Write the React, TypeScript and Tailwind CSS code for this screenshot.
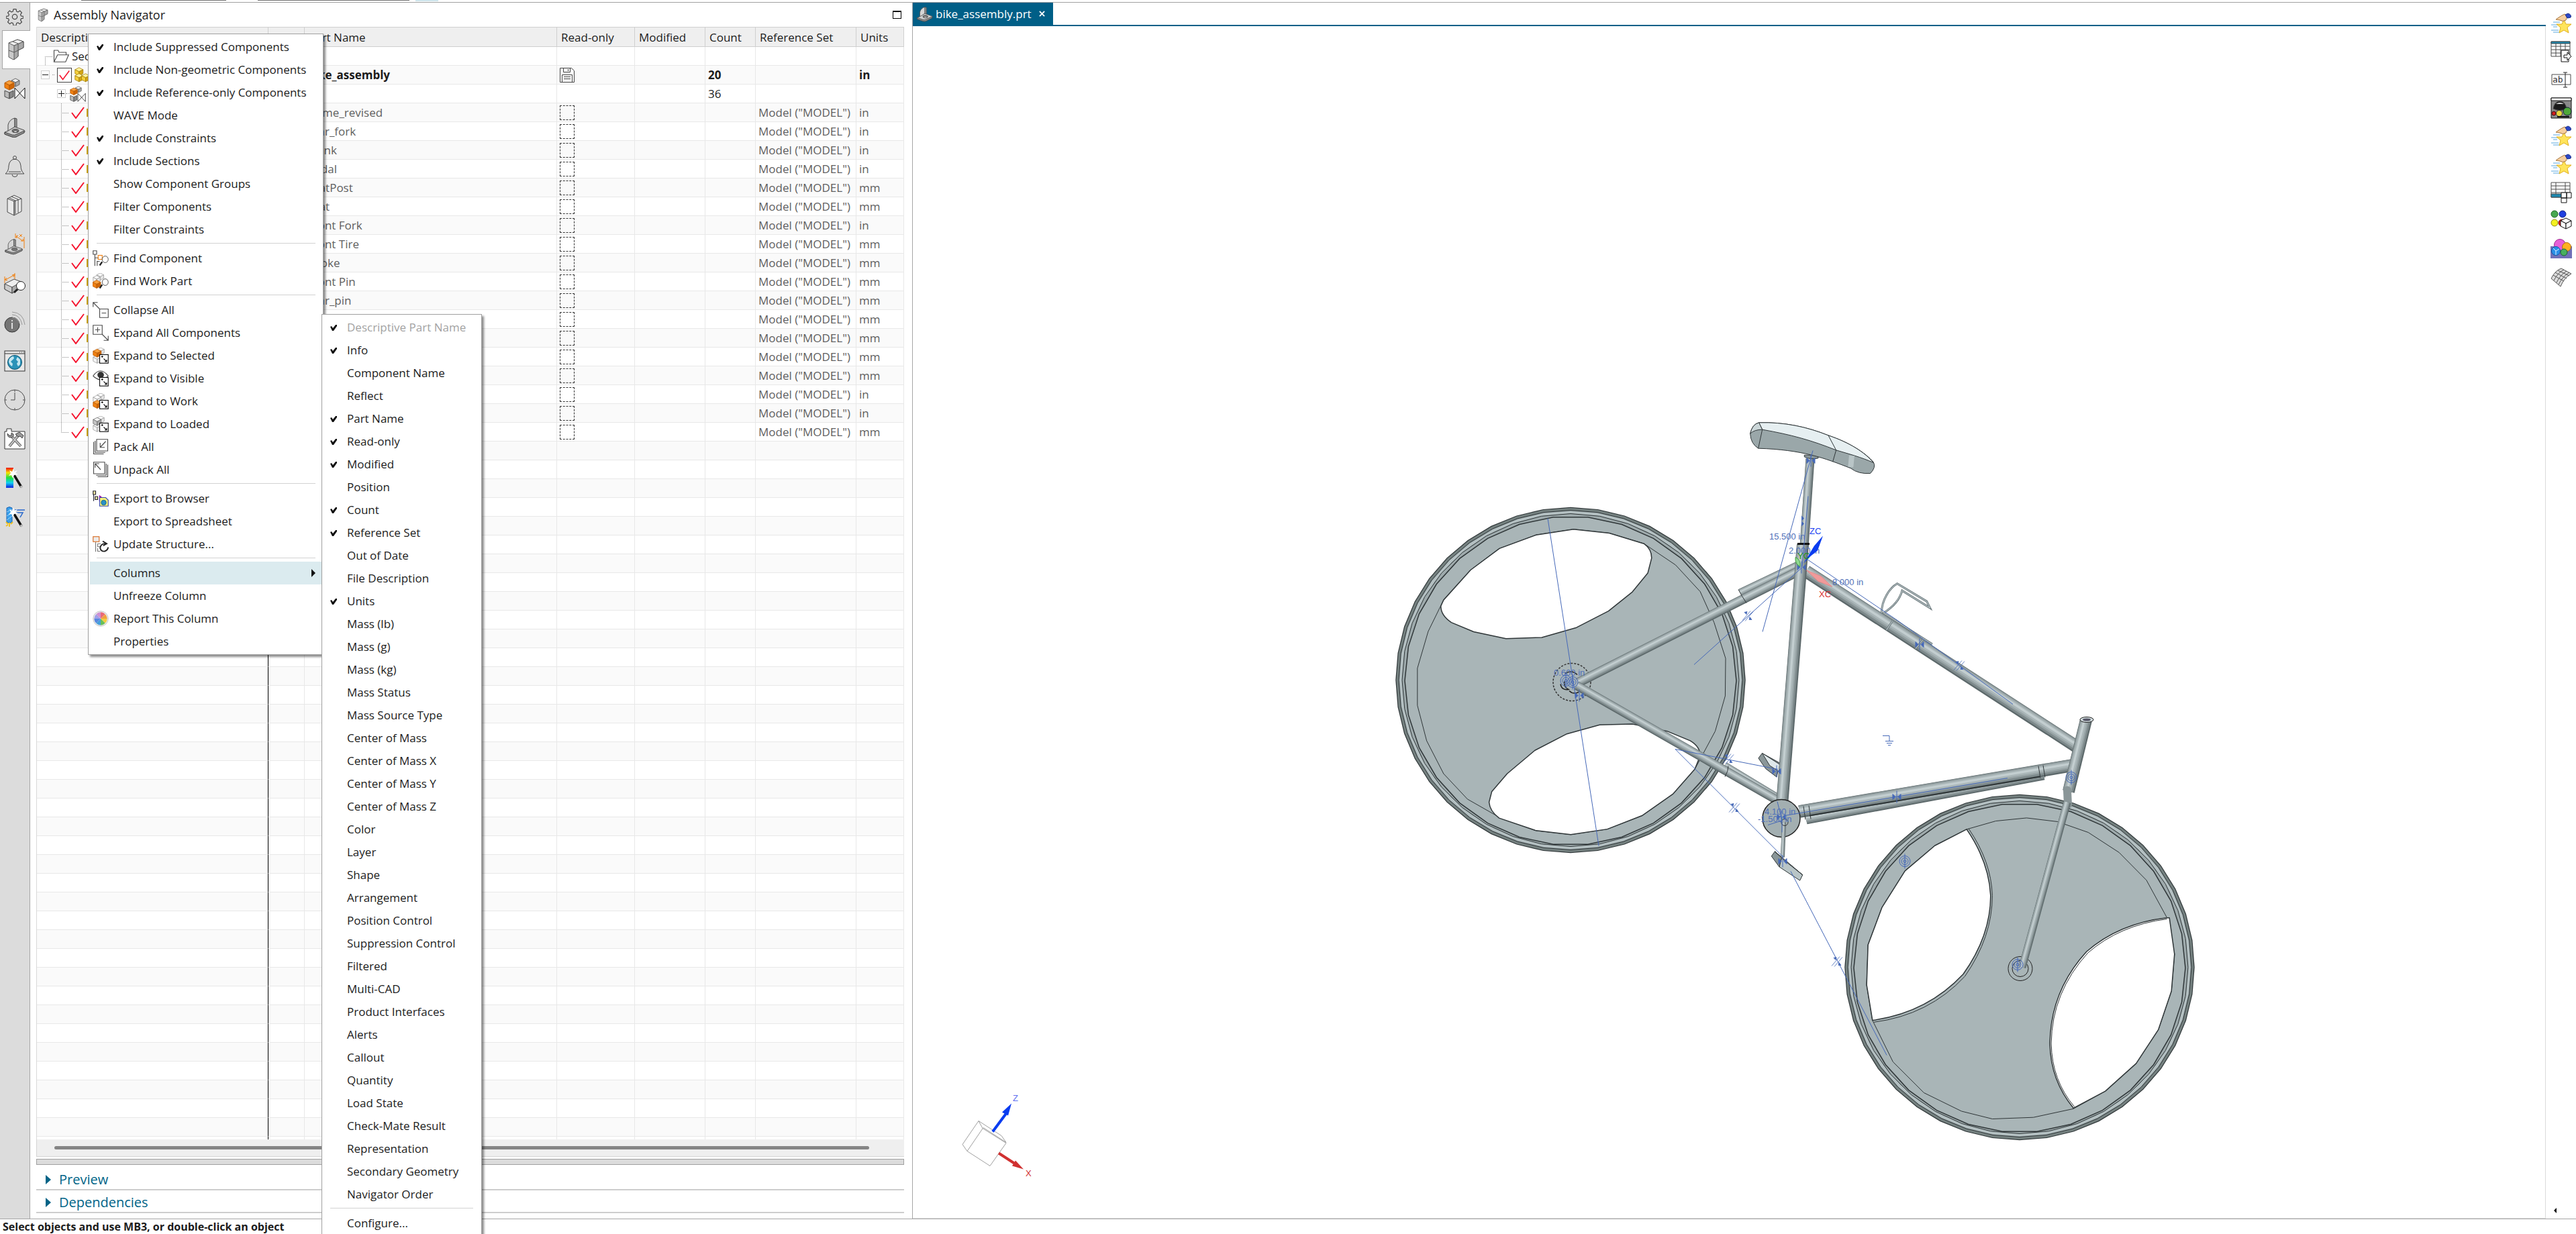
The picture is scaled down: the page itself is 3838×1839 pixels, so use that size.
import { useState } from 'react'
import type { ReactNode } from 'react'

type IconProps = { className?: string }

const INK = '#4a4a4a'
const ORANGE = '#f08010'

/* ---------- icons ---------- */

const Svg = ({ children, className = 'size-8' }: { children: ReactNode; className?: string }) => (
  <svg viewBox="0 0 32 32" className={`shrink-0 ${className}`} fill="none" stroke={INK} strokeWidth="1" aria-hidden="true">
    {children}
  </svg>
)

// isometric cube, (x, y) is the top corner
const Cube = ({ x, y, s = 6, c = ['#f2f2f2', '#c4c4c4', '#a8a8a8'], stroke = '#666' }: { x: number; y: number; s?: number; c?: string[]; stroke?: string }) => (
  <g stroke={stroke} strokeLinejoin="round">
    <path d={`M${x} ${y}l${s} ${s / 2}l${-s} ${s / 2}l${-s} ${-s / 2}z`} fill={c[0]} />
    <path d={`M${x - s} ${y + s / 2}l${s} ${s / 2}v${s}l${-s} ${-s / 2}z`} fill={c[1]} />
    <path d={`M${x + s} ${y + s / 2}l${-s} ${s / 2}v${s}l${s} ${-s / 2}z`} fill={c[2]} />
  </g>
)

const ORANGE_CUBE = ['#f9a03c', '#f08010', '#cf6606']
const YELLOW_CUBE = ['#fff3a0', '#f3cf3c', '#d3a514']
const WHITE_CUBE = ['#fff', '#f4f4f4', '#e6e6e6']

const GearIcon = () => (
  <Svg className="size-[26px]">
    <path
      strokeWidth="1.5"
      strokeLinejoin="round"
      d="M13.500 2h5l.8 4.200 2.600 1.100 3.500-2.400 3.500 3.500-2.400 3.500 1.100 2.600 4.200.8v3.400l-4.200.8-1.100 2.600 2.400 3.500-3.500 3.500-3.500-2.400-2.600 1.100-.8 4.200h-5l-.8-4.200-2.600-1.100-3.500 2.400-3.500-3.500 2.400-3.500-1.100-2.600-4.200-.8v-3.400l4.200-.8 1.100-2.600-2.400-3.500 3.500-3.500 3.500 2.400 2.600-1.100z"
    />
    <circle cx="16" cy="16" r="4.500" strokeWidth="1.500" />
  </Svg>
)

const BlocksIcon = ({ className }: IconProps) => (
  <Svg className={className}>
    <g stroke="#5a5a5a" strokeLinejoin="round">
      <path d="M5 6l13-5 9 3v9l-8 4v9l-7 5-7-4z" fill="#c9c9c9" />
      <path d="M5 6l13-5 9 3-14 6z" fill="#efefef" />
      <path d="M13 10l14-6v9l-8 4v9l-6 5z" fill="#a9a9a9" />
      <path d="M5 17l8 3 6-3M19 7v10M11 4l8 3" fill="none" />
    </g>
  </Svg>
)

const ConstraintIcon = ({ className }: IconProps) => (
  <Svg className={className}>
    <Cube x={17} y={1} s={6} />
    <path d="M1 19l7 3v9l-7-3z" fill="#bbb" />
    <path d="M8 22l6-3v9l-6 3z" fill="#888" />
    <Cube x={8} y={4} s={7} c={ORANGE_CUBE} stroke="#b65a08" />
    <path d="M16 15l15 16V15L16 31z" fill="#fff" stroke="#111" />
  </Svg>
)

const BracketIcon = ({ className }: IconProps) => (
  <Svg className={className}>
    <path d="M6 12q2-8 10-10v13l-10 7z" fill="#d6d6d6" />
    <path d="M16 2l3 1v13l-3-1z" fill="#9a9a9a" />
    <path d="M6 21l10-6 14 5q3 3-3 5l-9 5q-3 1-6 0L1 26v-3z" fill="#cfcfcf" />
    <path d="M1 23l11 4q4 1 7-1l11-5v3l-12 6q-3 1-6 0L1 26z" fill="#8d8d8d" />
    <ellipse cx="17" cy="21" rx="5" ry="2.600" fill="#777" />
    <ellipse cx="17" cy="22" rx="3" ry="1.400" fill="#ddd" />
  </Svg>
)

const BellIcon = () => (
  <Svg>
    <circle cx="16" cy="3" r="2.500" />
    <path d="M2 27q5-4 5-12 1-9 9-10 8 1 9 10 0 8 5 12zM7 24h18" />
    <path d="M12 28a4 3.500 0 0 0 8 0" />
  </Svg>
)

const BooksIcon = () => (
  <Svg>
    <path d="M5 6l10-5 11 5v19l-11 6-10-5z" fill="#e9e9e9" />
    <path d="M5 6l10 4v21M15 10l11-4M8 5l9 4v20M11 3l10 4v20M15 10V31" />
  </Svg>
)

const BracketDimIcon = () => (
  <Svg>
    <g transform="translate(1 7) scale(.86 .78)">
      <path d="M6 12q2-8 10-10v13l-10 7z" fill="#d6d6d6" />
      <path d="M16 2l3 1v13l-3-1z" fill="#9a9a9a" />
      <path d="M6 21l10-6 14 5q3 3-3 5l-9 5q-3 1-6 0L1 26v-3z" fill="#cfcfcf" />
      <path d="M1 23l11 4q4 1 7-1l11-5v3l-12 6q-3 1-6 0L1 26z" fill="#8d8d8d" />
      <ellipse cx="17" cy="21" rx="5" ry="2.600" fill="#777" />
    </g>
    <path d="M17 0v7M30 5v17M18 4l10 7M21 3l-3 1 1 3M25 11h4l-1-3M23 1l4 4M27 1l-4 4" stroke={ORANGE} />
  </Svg>
)

const MeasureIcon = () => (
  <Svg>
    <path d="M1 17l14-7 11 4v9l-14 8-11-6z" fill="#eee" />
    <path d="M1 17l11 5v9l-11-6z" fill="#ccc" />
    <path d="M12 22l14-8v9l-14 8z" fill="#aaa" />
    <path d="M1 6v10M16 1v9M2 11l13-7M4 8l-3 3 4 1M12 4l4-1-2 4" stroke={ORANGE} />
    <path d="M20 25l-5 5" stroke="#222" strokeWidth="3" />
    <circle cx="25" cy="20" r="6.500" fill="#fff" stroke="#222" />
  </Svg>
)

const InfoIcon = () => (
  <Svg>
    <circle cx="12" cy="20" r="11" fill="#757575" stroke="#333" />
    <path d="M12 17v9M12 13v2" stroke="#fff" strokeWidth="1.500" />
    <path d="M12 5q12 0 15 15M12 1q17 1 19 19M12 9q8 1 11 9" stroke="#999" />
  </Svg>
)

const GlobeIcon = () => (
  <Svg>
    <rect x="1" y="1" width="30" height="30" fill="#e8e8e8" stroke="#333" />
    <path d="M1 5h30M23 3h1M26 3h1M29 3h1" stroke="#333" />
    <circle cx="16" cy="18" r="10.500" fill="#2a92b8" stroke="#0c5572" />
    <path d="M8 13q3-4 6-4l1 3-3 3-2 2 3 3-1 4q-4-2-5-7zM20 10l4 4v7l-3 3-2-4 2-3-3-3z" fill="#c4e6f0" stroke="none" />
  </Svg>
)

const ClockIcon = () => (
  <Svg>
    <circle cx="16" cy="16" r="15" />
    <path d="M16 5v11h-6M16 1v3M16 28v3M1 16h3M28 16h3" />
  </Svg>
)

const ToolsIcon = () => (
  <Svg>
    <path d="M1 31V5h3V1h7v4h20v26z" fill="#fff" stroke="#333" />
    <path d="M8 27L22 10M25 27L10 11" stroke="#555" strokeWidth="4" />
    <path d="M8 27L22 10M25 27L10 11" stroke="#c4c4c4" strokeWidth="2" />
    <path d="M5 8q0 6 5 6t4-5l-3-2v4l-3 0zM17 9l6-3 6 5-2 4-3-3-3 1z" fill="#999" stroke="#444" />
  </Svg>
)

const Wand = () => (
  <>
    <path d="M15 12l11 18" stroke="#111" strokeWidth="3.500" />
    <path d="M25 28l1.500 3" stroke="#bbb" strokeWidth="3" />
    <path d="M14 2l1 5 5-2-3 4 4 2-6 1-2 5-2-5-4 1 3-4-2-4 4 2z" fill="#fff" stroke="none" />
  </>
)

const SpectrumIcon = () => (
  <Svg>
    <defs>
      <linearGradient id="spectrum" x1="0" y1="0" x2="0" y2="1">
        <stop offset="0" stopColor="#f01010" />
        <stop offset=".25" stopColor="#f8e000" />
        <stop offset=".5" stopColor="#20e040" />
        <stop offset=".75" stopColor="#10d0f0" />
        <stop offset="1" stopColor="#1020e0" />
      </linearGradient>
    </defs>
    <rect x="3" y="1" width="11" height="30" fill="url(#spectrum)" stroke="none" />
    <Wand />
  </Svg>
)

const DrillIcon = () => (
  <Svg>
    <path d="M4 3q4-3 8 0v21q-4 3-8 0z" fill="#3aa0ea" stroke="#1862b4" />
    <path d="M4 9l8-4M4 15l8-5M4 21l8-6" stroke="#9cd0f8" />
    <path d="M16 6h15M18 10h10l-4 7" stroke="#2566cc" strokeWidth="1.500" />
    <path d="M3 24l3 3M8 25v6M13 24l-3 3M3 30l3-2" stroke="#eec020" strokeWidth="2" />
    <Wand />
  </Svg>
)

const MagnifierMark = () => (
  <>
    <path d="M19 23l-5 7" stroke="#222" strokeWidth="3" />
    <ellipse cx="25" cy="18" rx="6" ry="6.500" fill="#fff" stroke="#222" />
  </>
)

const ExpandMark = () => (
  <>
    <rect x="14" y="14" width="17" height="17" fill="#fff" stroke="#111" strokeWidth="1.500" />
    <path d="M17 18h4M19 16v4M22 22l6 6M28 24v4h-4" stroke="#111" strokeWidth="1.500" />
  </>
)

const FindComponentIcon = () => (
  <Svg className="size-6">
    <path d="M1 1h7v7H1zM4.500 8v23M4.500 15h7M8 22h6M9 22v9" strokeWidth="1.500" />
    <rect x="11" y="10" width="8" height="8" stroke={ORANGE} strokeWidth="1.500" />
    <MagnifierMark />
  </Svg>
)

const FindWorkIcon = () => (
  <Svg className="size-6">
    <Cube x={15} y={0} s={7} c={WHITE_CUBE} stroke="#999" />
    <Cube x={8} y={5} s={7} c={WHITE_CUBE} stroke="#999" />
    <Cube x={8} y={14} s={8} c={ORANGE_CUBE} stroke="#b65a08" />
    <MagnifierMark />
  </Svg>
)

const CollapseIcon = () => (
  <Svg className="size-6">
    <path d="M1 10V1h9M1 1l13 13M14 14h17v17H14zM18 22h9" strokeWidth="1.500" />
  </Svg>
)

const ExpandAllIcon = () => (
  <Svg className="size-6">
    <path d="M1 1h18v18H1zM5 10h10M10 5v10M19 19l12 12M31 22v9h-9" strokeWidth="1.500" />
  </Svg>
)

const ExpandSelectedIcon = () => (
  <Svg className="size-6">
    <Cube x={16} y={0} s={7} c={WHITE_CUBE} stroke="#999" />
    <Cube x={9} y={15} s={8} c={WHITE_CUBE} stroke="#999" />
    <Cube x={9} y={3} s={8} c={ORANGE_CUBE} stroke="#b65a08" />
    <ExpandMark />
  </Svg>
)

const ExpandVisibleIcon = () => (
  <Svg className="size-6">
    <path d="M1 11q14-20 30 0-15 15-30 0z" fill="#fff" strokeWidth="1.500" />
    <circle cx="16" cy="9" r="6" fill="#333" />
    <ExpandMark />
  </Svg>
)

const ExpandWorkIcon = () => (
  <Svg className="size-6">
    <Cube x={16} y={0} s={7} c={WHITE_CUBE} stroke="#999" />
    <Cube x={9} y={4} s={8} c={WHITE_CUBE} stroke="#999" />
    <Cube x={9} y={14} s={8} c={ORANGE_CUBE} stroke="#b65a08" />
    <ExpandMark />
  </Svg>
)

const ExpandLoadedIcon = () => (
  <Svg className="size-6">
    <Cube x={16} y={0} s={7} c={WHITE_CUBE} stroke="#999" />
    <Cube x={9} y={15} s={8} c={WHITE_CUBE} stroke="#999" />
    <Cube x={9} y={3} s={8} />
    <ExpandMark />
  </Svg>
)

const PackIcon = () => (
  <Svg className="size-6">
    <path d="M2 6v24h20M5 4v23h20" strokeWidth="1.500" />
    <path d="M8 1h22v23H8z" fill="#fff" strokeWidth="1.500" />
    <path d="M26 5L15 17M15 8v9h9" strokeWidth="1.500" />
  </Svg>
)

const UnpackIcon = () => (
  <Svg className="size-6">
    <path d="M30 6v24H10M27 4v23H7" strokeWidth="1.500" />
    <path d="M2 1h22v23H2z" fill="#fff" strokeWidth="1.500" />
    <path d="M5 12V4h8M5 4l11 12" strokeWidth="1.500" />
  </Svg>
)

const ExportBrowserIcon = () => (
  <Svg className="size-6">
    <path d="M1 1h5v7H1zM5 12h5v6H5zM2 8v13" fill="#f4e9a0" stroke="#223" strokeWidth="1.500" />
    <path d="M13 9l8 6-8 7z" fill="#a010a0" stroke="none" />
    <path d="M14 14h12l5 5v12H14z" fill="#f6f27a" stroke="#3848b0" strokeWidth="1.500" />
    <circle cx="22" cy="24" r="5" fill="#2a92c8" stroke="#0c5572" />
  </Svg>
)

const UpdateStructureIcon = () => (
  <Svg className="size-6">
    <rect x="1" y="1" width="12" height="10" fill="#ececec" stroke="#d86a20" strokeWidth="1.500" />
    <path d="M6 12v19M10 15h6M10 15v6h5M10 24v6h5" stroke="#777" strokeWidth="1.500" />
    <path d="M27 15q-11-1-12 9 2 7 9 6 6-2 7-8M20 10l8 5-7 4" stroke="#222" strokeWidth="2.500" />
  </Svg>
)

const PieIcon = () => (
  <Svg className="size-6">
    <circle cx="16" cy="16" r="15" fill="#eee" stroke="#b8b8b8" />
    <g stroke="none">
      <path d="M16 16V3a13 13 0 0 1 9 4z" fill="#e86a78" />
      <path d="M16 16l9-9a13 13 0 0 1 4 9z" fill="#f0a040" />
      <path d="M16 16h13a13 13 0 0 1-4 9z" fill="#f4cc40" />
      <path d="M16 16l9 9a13 13 0 0 1-9 4z" fill="#68c058" />
      <path d="M16 16v13a13 13 0 0 1-9-4z" fill="#48a0d8" />
      <path d="M16 16l-9 9a13 13 0 0 1-4-9z" fill="#5888e0" />
      <path d="M16 16H3a13 13 0 0 1 4-9z" fill="#a0a0e8" />
      <path d="M16 16L7 7a13 13 0 0 1 9-4z" fill="#d090d0" />
    </g>
  </Svg>
)

const AssemblyIcon = () => (
  <Svg className="size-6">
    <Cube x={9} y={1} s={8} c={YELLOW_CUBE} stroke="#a07c08" />
    <Cube x={9} y={13} s={8} c={YELLOW_CUBE} stroke="#a07c08" />
    <Cube x={22} y={13} s={8} c={YELLOW_CUBE} stroke="#a07c08" />
  </Svg>
)

const FolderIcon = () => (
  <Svg className="size-6">
    <path d="M2 27V4h8l2 4h14v5M2 27L9 13h22l-6 14z" strokeWidth="1.500" />
  </Svg>
)

const SaveIcon = () => (
  <svg viewBox="0 0 22 22" className="size-[22px]" fill="none" stroke="#444" aria-hidden="true">
    <path d="M.5.5h17l4 4v17H.5zM5.500.5v6h10v-6M12.500 2v3M3.500 21V10.500h15V21M6 13.500h10M6 16.500h10" />
  </svg>
)

const StarHandIcon = () => (
  <Svg>
    <path d="M4 14h10M1 18h9M4 21h6M1 26h11M4 29h10" stroke="#5aa8e0" />
    <path d="M20 10l3 7h8l-6 5 2 8-7-4-7 4 2-8-6-5h8z" fill="#ffe45a" stroke="#e0b020" />
    <path d="M8 10q8-6 13-8l4 3-2 6q-5 3-9 0z" fill="#f6cfa0" stroke="#a87840" />
    <path d="M22 3l4-2q6 2 4 6l-5 1z" fill="#2c48c8" stroke="#182c88" />
  </Svg>
)

const TableExportIcon = () => (
  <Svg>
    <path d="M1 1h28v22H1zM1 8h28M1 13h28M1 18h28M8 4v19M15 4v19M22 4v19" fill="#fff" />
    <path d="M1 1h28v3H1z" fill="#1c88b0" />
    <path d="M16 14h11v17H16z" fill="#fff" stroke="#111" />
    <path d="M20 21h5v-4l6 6-6 6v-4h-5z" fill="#fff" stroke="#111" />
  </Svg>
)

const TextBoxIcon = () => (
  <Svg>
    <path d="M2 8h28v15H2z" fill="#fff" />
    <path d="M22 5v22M19 5h6M19 27h6" stroke="#222" />
    <text x="3" y="20" fontFamily="DejaVu Sans Mono, monospace" fontSize="13" fill="#333" stroke="none">ab</text>
  </Svg>
)

const RenderIcon = () => (
  <Svg>
    <path d="M1 1h30v30H1z" fill="#8a8a8a" stroke="#111" />
    <path d="M1 1h30v4H1z" fill="#fff" stroke="#111" />
    <path d="M4 17q2-11 10-11t10 11q-10 5-20 0z" fill="#1a1a1a" />
    <path d="M8 10q6-4 12 0z" fill="#ddd" stroke="none" />
    <circle cx="25" cy="21" r="6" fill="#4fa83a" stroke="#123" />
    <circle cx="13" cy="24" r="4.500" fill="#e8d840" stroke="#443" />
    <circle cx="5" cy="24" r="3" fill="#d02020" stroke="#411" />
    <path d="M10 29h18" stroke="#111" strokeWidth="2" />
  </Svg>
)

const TableCellsIcon = () => (
  <Svg>
    <path d="M1 1h28v22H1zM1 6h28M1 11h28M1 16h28M8 1v22M22 1v15" fill="#fff" />
    <path d="M1 18h15v5H1z" fill="#1c88b0" />
    <path d="M16 16h8v8h-8zM24 16h7v8h-7zM16 24h8v7h-8z" fill="#fff" stroke="#111" />
  </Svg>
)

const SpheresCubeIcon = () => (
  <Svg>
    <circle cx="6" cy="6" r="5" fill="#48a850" stroke="#1c6420" />
    <circle cx="18" cy="6" r="5" fill="#2040e0" stroke="#102080" />
    <circle cx="6" cy="19" r="5" fill="#f4f020" stroke="#908c10" />
    <circle cx="17" cy="19" r="5" fill="#e01818" stroke="#801010" />
    <Cube x={23} y={12} s={8} c={['#fff', '#fff', '#fff']} stroke="#111" />
  </Svg>
)

const SpheresIcon = () => (
  <Svg>
    <path d="M0 12h32v18H0z" fill="#7070b8" stroke="none" />
    <circle cx="14" cy="10" r="8.500" fill="#e860d8" stroke="#a03090" />
    <circle cx="24" cy="13" r="6.500" fill="#ffb020" stroke="#b07010" />
    <circle cx="8" cy="19" r="6.500" fill="#2c90e8" stroke="#1058a0" />
    <circle cx="20" cy="21" r="5" fill="#48b060" stroke="#1c6430" />
    <path d="M4 15l4 4 5-3M8 19v6" stroke="#d8f0ff" />
  </Svg>
)

const SurfaceIcon = () => (
  <Svg>
    <path d="M1 18Q7 6 16 3l15 8Q20 17 15 30z" fill="#dcdcdc" stroke="#555" />
    <path d="M5 21Q11 9 20 5M9 24Q15 12 24 7M12 27Q18 15 28 9M4 13l16 9M7 9l17 9M11 6l17 8" stroke="#555" />
  </Svg>
)

/* ---------- data ---------- */

type Entry = { label: string; checked?: boolean; icon?: ReactNode; muted?: boolean; submenu?: boolean } | null

// null draws a separator
const contextMenu: Entry[] = [
  { label: 'Include Suppressed Components', checked: true },
  { label: 'Include Non-geometric Components', checked: true },
  { label: 'Include Reference-only Components', checked: true },
  { label: 'WAVE Mode' },
  { label: 'Include Constraints', checked: true },
  { label: 'Include Sections', checked: true },
  { label: 'Show Component Groups' },
  { label: 'Filter Components' },
  { label: 'Filter Constraints' },
  null,
  { label: 'Find Component', icon: <FindComponentIcon /> },
  { label: 'Find Work Part', icon: <FindWorkIcon /> },
  null,
  { label: 'Collapse All', icon: <CollapseIcon /> },
  { label: 'Expand All Components', icon: <ExpandAllIcon /> },
  { label: 'Expand to Selected', icon: <ExpandSelectedIcon /> },
  { label: 'Expand to Visible', icon: <ExpandVisibleIcon /> },
  { label: 'Expand to Work', icon: <ExpandWorkIcon /> },
  { label: 'Expand to Loaded', icon: <ExpandLoadedIcon /> },
  { label: 'Pack All', icon: <PackIcon /> },
  { label: 'Unpack All', icon: <UnpackIcon /> },
  null,
  { label: 'Export to Browser', icon: <ExportBrowserIcon /> },
  { label: 'Export to Spreadsheet' },
  { label: 'Update Structure...', icon: <UpdateStructureIcon /> },
  null,
  { label: 'Columns', submenu: true },
  { label: 'Unfreeze Column' },
  { label: 'Report This Column', icon: <PieIcon /> },
  { label: 'Properties' },
]

const columnsMenu: Entry[] = [
  { label: 'Descriptive Part Name', checked: true, muted: true },
  { label: 'Info', checked: true },
  { label: 'Component Name' },
  { label: 'Reflect' },
  { label: 'Part Name', checked: true },
  { label: 'Read-only', checked: true },
  { label: 'Modified', checked: true },
  { label: 'Position' },
  { label: 'Count', checked: true },
  { label: 'Reference Set', checked: true },
  { label: 'Out of Date' },
  { label: 'File Description' },
  { label: 'Units', checked: true },
  { label: 'Mass (lb)' },
  { label: 'Mass (g)' },
  { label: 'Mass (kg)' },
  { label: 'Mass Status' },
  { label: 'Mass Source Type' },
  { label: 'Center of Mass' },
  { label: 'Center of Mass X' },
  { label: 'Center of Mass Y' },
  { label: 'Center of Mass Z' },
  { label: 'Color' },
  { label: 'Layer' },
  { label: 'Shape' },
  { label: 'Arrangement' },
  { label: 'Position Control' },
  { label: 'Suppression Control' },
  { label: 'Filtered' },
  { label: 'Multi-CAD' },
  { label: 'Product Interfaces' },
  { label: 'Alerts' },
  { label: 'Callout' },
  { label: 'Quantity' },
  { label: 'Load State' },
  { label: 'Check-Mate Result' },
  { label: 'Representation' },
  { label: 'Secondary Geometry' },
  { label: 'Navigator Order' },
  null,
  { label: 'Configure...' },
]

const parts = [
  { name: 'frame_revised', units: 'in' },
  { name: 'rear_fork', units: 'in' },
  { name: 'crank', units: 'in' },
  { name: 'pedal', units: 'in' },
  { name: 'seatPost', units: 'mm' },
  { name: 'seat', units: 'mm' },
  { name: 'Front Fork', units: 'in' },
  { name: 'Front Tire', units: 'mm' },
  { name: 'Spoke', units: 'mm' },
  { name: 'Front Pin', units: 'mm' },
  { name: 'rear_pin', units: 'mm' },
  { name: '', units: 'mm' },
  { name: '', units: 'mm' },
  { name: '', units: 'mm' },
  { name: '', units: 'mm' },
  { name: '', units: 'in' },
  { name: '', units: 'in' },
  { name: '', units: 'mm' },
]

const railTabs = [
  { label: 'Assembly Navigator', icon: <BlocksIcon /> },
  { label: 'Constraint Navigator', icon: <ConstraintIcon /> },
  { label: 'Part Navigator', icon: <BracketIcon /> },
  { label: 'Notifications', icon: <BellIcon /> },
  { label: 'Reuse Library', icon: <BooksIcon /> },
  { label: 'View Manager', icon: <BracketDimIcon /> },
  { label: 'Inspection', icon: <MeasureIcon /> },
  { label: 'Information', icon: <InfoIcon /> },
  { label: 'Web Browser', icon: <GlobeIcon /> },
  { label: 'History', icon: <ClockIcon /> },
  { label: 'Roles', icon: <ToolsIcon /> },
  { label: 'Color Wizard', icon: <SpectrumIcon /> },
  { label: 'Machining Wizard', icon: <DrillIcon /> },
]

const toolButtons = [
  { label: 'Favorites', icon: <StarHandIcon /> },
  { label: 'Export Table', icon: <TableExportIcon /> },
  { label: 'Rename', icon: <TextBoxIcon /> },
  { label: 'Render', icon: <RenderIcon /> },
  { label: 'Quick Pick', icon: <StarHandIcon /> },
  { label: 'Quick Launch', icon: <StarHandIcon /> },
  { label: 'Table Cells', icon: <TableCellsIcon /> },
  { label: 'Object Display', icon: <SpheresCubeIcon /> },
  { label: 'Materials', icon: <SpheresIcon /> },
  { label: 'Surface', icon: <SurfaceIcon /> },
]

/* ---------- menus ---------- */

const MenuList = ({ entries, pad }: { entries: Entry[]; pad: string }) => (
  <div role="menu" className={`flex flex-col py-0.5 ${pad}`}>
    {entries.map((entry, index) =>
      entry ? (
        <button
          key={entry.label}
          type="button"
          role={entry.checked ? 'menuitemcheckbox' : 'menuitem'}
          aria-checked={entry.checked}
          className={`flex h-[34px] items-center text-left whitespace-nowrap
                     ${entry.submenu ? 'bg-[#dbebef]' : ''}
                     ${entry.muted ? 'text-[#a3a3a3]' : ''}`}
        >
          <span className="flex w-[35px] shrink-0 items-center">
            {entry.checked && (
              <svg viewBox="0 0 10 9" className="ml-2.5 h-[9px] w-[10px]" aria-hidden="true">
                <path d="M0 3l2-1 2 3 4-5 2 0v2l-5 7h-2z" fill="#111" />
              </svg>
            )}
            {entry.icon && <span className="ml-1">{entry.icon}</span>}
          </span>
          <span className="grow">{entry.label}</span>
          {entry.submenu && (
            <svg viewBox="0 0 6 12" className="mr-2.5 h-3 w-1.5" aria-hidden="true">
              <path d="M0 0l6 6-6 6z" fill="#111" />
            </svg>
          )}
        </button>
      ) : (
        <div key={index} role="separator" className="mx-2.5 flex h-[9px] flex-col pt-[3px]">
          <div className="h-px bg-[#d2d2d2]" />
        </div>
      ),
    )}
  </div>
)

/* ---------- navigator ---------- */

const RedCheck = ({ boxed, label }: { boxed?: boolean; label: string }) => (
  <label className={`relative flex size-[22px] shrink-0 items-center justify-center ${boxed ? 'border border-[#444] bg-white' : ''}`}>
    <input type="checkbox" defaultChecked aria-label={label} className="peer absolute inset-0 appearance-none" />
    <svg viewBox="0 0 20 18" className={boxed ? 'h-4 w-4' : 'h-[18px] w-5'} fill="none" stroke="#f5142e" strokeWidth="2" aria-hidden="true">
      <path d="M1 9l6 8L19 1" />
    </svg>
  </label>
)

const Guide = ({ last, corner }: { last?: boolean; corner?: boolean }) => (
  <svg viewBox="0 0 12 28" className="h-7 w-3 shrink-0" fill="none" stroke="#8c8c8c" strokeDasharray="1 1" aria-hidden="true">
    <path d={corner ? 'M.5 14v14' : last ? 'M.5 0v14' : 'M.5 0v28'} />
    <path d="M0 14.500h11" />
  </svg>
)

const Toggle = ({ open }: { open?: boolean }) => (
  <button type="button" aria-label={open ? 'Collapse' : 'Expand'} className="flex size-[13px] shrink-0 items-center justify-center border border-[#d0d0d0] bg-white">
    <svg viewBox="0 0 9 9" className="size-[9px]" stroke="#222" aria-hidden="true">
      <path d={open ? 'M0 4.500h9' : 'M0 4.500h9M4.500 0v9'} />
    </svg>
  </button>
)

const cell = 'h-7 border-r border-b border-[#e8e8e8] p-0 pl-1 overflow-hidden whitespace-nowrap'
const head = 'h-[30px] border-y border-r border-[#cfcfcf] p-0 pt-0.5 pl-1.5 text-left font-normal whitespace-nowrap overflow-hidden'

type RowProps = { tree?: ReactNode; name?: string; readOnly?: ReactNode; count?: string; set?: string; units?: string; className?: string }

const Row = ({ tree, name, readOnly, count, set, units, className = '' }: RowProps) => (
  <tr className={`even:bg-[#fafafa] ${className}`}>
    <td className="h-7 overflow-hidden border-r border-b border-r-black border-b-[#e8e8e8] p-0 whitespace-nowrap">
      {tree && <div className="flex h-[27px] items-center">{tree}</div>}
    </td>
    <td className={cell} />
    <td className={cell}>{name}</td>
    <td className={cell}>{readOnly}</td>
    <td className={cell} />
    <td className={cell}>{count}</td>
    <td className={cell}>{set}</td>
    <td className={cell}>{units}</td>
  </tr>
)

const PartsTable = () => (
  <div className="min-h-0 grow overflow-hidden border-l border-[#d9d9d9]">
    <table className="w-full table-fixed border-separate border-spacing-0">
      <colgroup>
        <col className="w-[345px]" />
        <col className="w-[54px]" />
        <col />
        <col className="w-[116px]" />
        <col className="w-[105px]" />
        <col className="w-[75px]" />
        <col className="w-[150px]" />
        <col className="w-[71px]" />
      </colgroup>
      <thead className="bg-[#efefef]">
        <tr>
          <th className={head}>Descriptive Part Name</th>
          <th className={head}>Info</th>
          <th className={head}>Part Name</th>
          <th className={head}>Read-only</th>
          <th className={head}>Modified</th>
          <th className={head}>Count</th>
          <th className={head}>Reference Set</th>
          <th className={head}>Units</th>
        </tr>
      </thead>
      <tbody>
        <Row
          tree={
            <>
              <span className="flex pl-3"><Guide corner /></span>
              <FolderIcon />
              <span className="pl-1">Sections</span>
            </>
          }
        />
        <Row
          className="font-bold"
          name="bike_assembly"
          readOnly={<SaveIcon />}
          count="20"
          units="in"
          tree={
            <div className="flex items-center gap-1 pl-1.5">
              <Toggle open />
              <span className="w-[3px] border-t border-dotted border-[#8c8c8c]" />
              <RedCheck boxed label="bike_assembly" />
              <AssemblyIcon />
            </div>
          }
        />
        <Row
          count="36"
          tree={
            <div className="flex items-center pl-[30px]">
              <Toggle />
              <span className="w-1.5 border-t border-dotted border-[#8c8c8c]" />
              <ConstraintIcon className="size-6" />
            </div>
          }
        />
        {parts.map((part, index) => (
          <Row
            key={index}
            className="text-[#5f5f5f]"
            name={part.name}
            readOnly={<span className="block size-[22px] border border-dashed border-[#333]" />}
            set={'Model ("MODEL")'}
            units={part.units}
            tree={
              <div className="flex items-center gap-0.5 pl-9">
                <Guide last={index === parts.length - 1} />
                <RedCheck label={part.name || `Component ${index + 1}`} />
                <span className="h-3 w-2 bg-[#c9a014]" />
              </div>
            }
          />
        ))}
        {Array.from({ length: 38 }, (_, index) => (
          <Row key={index} />
        ))}
      </tbody>
    </table>
  </div>
)

const Section = ({ title }: { title: string }) => (
  <button type="button" className="flex h-[34px] w-full shrink-0 items-center gap-3 border-b-2 border-[#cdcdcd] pt-1 pl-3.5 text-left text-xl text-[#006487]">
    <svg viewBox="0 0 8 14" className="h-3.5 w-2" aria-hidden="true">
      <path d="M0 0l8 7-8 7z" fill="#006487" />
    </svg>
    {title}
  </button>
)

const Navigator = () => (
  <section aria-label="Assembly Navigator" className="flex w-[1314px] shrink-0 flex-col pr-3 pl-[9px]">
    <header className="flex h-9 shrink-0 items-center justify-between">
      <h1 className="flex items-center gap-1.5 text-lg">
        <BlocksIcon className="h-[23px] w-5" />
        Assembly Navigator
      </h1>
      <button type="button" aria-label="Maximize" className="mr-1 h-3 w-[13px] border border-t-2 border-black" />
    </header>
    <PartsTable />
    <div className="flex h-[26px] shrink-0 items-center border-b border-l border-[#d4d4d4] bg-[#efefef] pr-[52px] pl-[26px]">
      <div className="h-[5px] grow rounded-full bg-[#858585]" />
    </div>
    <div className="mt-[3px] h-[9px] shrink-0 border border-[#a0a0a0] bg-[#dcdcdc]" />
    <div className="flex flex-col pt-1 pb-2">
      <Section title="Preview" />
      <Section title="Dependencies" />
    </div>
  </section>
)

/* ---------- bike drawing ---------- */

type TubeProps = { from: [number, number]; to: [number, number]; w: number }

const Tube = ({ from, to, w }: TubeProps) => {
  const [x1, y1] = from
  const [x2, y2] = to
  const len = Math.hypot(x2 - x1, y2 - y1)
  // unit normal turned to the upper left, where the light comes from
  let nx = (y2 - y1) / len
  let ny = -(x2 - x1) / len
  if (nx + ny * 2 > 0) {
    nx = -nx
    ny = -ny
  }
  const bands = [
    { color: '#5d696b', width: w, shift: 0 },
    { color: '#7d898b', width: w * 0.86, shift: w * 0.05 },
    { color: '#97a3a5', width: w * 0.66, shift: w * 0.1 },
    { color: '#aab6b8', width: w * 0.44, shift: w * 0.12 },
    { color: '#c3ced0', width: w * 0.18, shift: w * 0.14 },
  ]
  return (
    <g>
      {bands.map((b) => (
        <line
          key={b.color}
          x1={x1 + nx * b.shift}
          y1={y1 + ny * b.shift}
          x2={x2 + nx * b.shift}
          y2={y2 + ny * b.shift}
          stroke={b.color}
          strokeWidth={b.width}
        />
      ))}
    </g>
  )
}

// faceted ring outline
const facets = (cx: number, cy: number, rx: number, ry: number, n: number) =>
  Array.from({ length: n }, (_, i) => {
    const a = (i / n) * Math.PI * 2
    return `${(cx + rx * Math.cos(a)).toFixed(1)},${(cy + ry * Math.sin(a)).toFixed(1)}`
  }).join(' ')

const Rim = ({ cx, cy }: { cx: number; cy: number }) => (
  <g stroke="#2f3638">
    <polygon points={facets(cx, cy, 260, 257, 40)} fill="#8b9799" strokeWidth="1.500" />
    <polygon points={facets(cx, cy, 258, 255, 40)} fill="none" stroke="#74807f" strokeWidth="3" />
    <polygon points={facets(cx, cy, 253, 250, 40)} fill="none" stroke="#b4c0c2" strokeWidth="4" />
    <polygon points={facets(cx, cy, 256, 253, 40)} fill="none" />
    <polygon points={facets(cx, cy, 251, 248, 36)} fill="#9eaaac" />
    <polygon points={facets(cx, cy + 1, 247, 245, 30)} fill="#a9b5b7" strokeWidth="1.500" />
  </g>
)

// arrows facing each other across a double slash
const Align = ({ x, y }: { x: number; y: number }) => (
  <g stroke="#4568b8" strokeWidth=".8">
    <path d={`M${x - 8} ${y + 7}l12-14M${x - 4} ${y + 8}l12-14`} />
    <path d={`M${x - 5} ${y - 5}l4-1-1 4zM${x + 6} ${y + 6}l-4 0 1-4z`} fill="#4568b8" />
  </g>
)

// arrows facing each other across a bar
const Touch = ({ x, y }: { x: number; y: number }) => (
  <g stroke="#4568b8">
    <path d={`M${x} ${y - 9}v18`} />
    <path d={`M${x - 6} ${y - 4}l4 4-4 4zM${x + 6} ${y - 4}l-4 4 4 4z`} fill="#4568b8" />
  </g>
)

const Concentric = ({ x, y }: { x: number; y: number }) => (
  <g stroke="#4568b8" fill="none">
    <circle cx={x} cy={y} r="8" />
    <circle cx={x} cy={y} r="5" />
    <circle cx={x} cy={y} r="2" />
    <path d={`M${x} ${y - 11}v22`} />
  </g>
)

const Bike = () => (
  <svg
    viewBox="1361 40 2432 1775"
    className="absolute inset-0 size-full [&_*]:[vector-effect:non-scaling-stroke]"
    fontFamily="Liberation Sans, Arial, sans-serif"
    fontSize="13"
    role="img"
    aria-label="Bike assembly model"
  >
    {/* rear wheel */}
    <Rim cx={2341} cy={1014} />
    <g transform="translate(2060 600) scale(.574 .4464)" stroke="#2f3638" strokeLinejoin="round">
      <path
        fill="#a9b5b7"
        d="M120 765L92 888V1012L116 1130 160 1240 222 1325 304 1385 400 1430 490 1443 585 1425 675 1380 755 1308 812 1225 865 1098 891 980 892 855 862 735 826 632 762 543 680 472 590 437 497 424 400 443 305 488 230 560 160 660z"
      />
      <path
        fill="#fff"
        strokeWidth="1.500"
        d="M160 660L230 560 305 488 400 443 497 424 590 437 680 472Q700 490 700 520L690 570 650 633 588 697 505 752 415 785 322 789 238 766 180 735Q152 710 153 680z"
      />
      <path
        fill="#fff"
        strokeWidth="1.500"
        d="M278 1335L285 1300 325 1240 397 1162 480 1107 565 1077 650 1074 740 1098 800 1130Q826 1150 826 1180L812 1225 755 1308 675 1380 585 1425 490 1443 400 1430 304 1388Q280 1365 278 1335z"
      />
    </g>
    {/* rear sprocket */}
    <circle cx="2343" cy="1017" r="28" fill="none" stroke="#333" strokeWidth="1.500" strokeDasharray="3 2" />
    <path d="M2326 1020q2 10 12 8-8-4-6-12M2339 1030q6 6 14 2M2333 1004q10-6 18 2" fill="none" stroke="#222" strokeWidth="1.500" />

    {/* front wheel */}
    <Rim cx={3010} cy={1442} />
    <g transform="translate(2500 1000) scale(.5102 .4591)" stroke="#2f3638" strokeLinejoin="round">
      <path
        fill="#a9b5b7"
        d="M845 515L930 488 1020 478 1110 490 1200 525 1290 590 1370 680 1430 802 1452 920 1443 1040 1405 1165 1340 1275 1250 1365 1157 1422 1040 1450 920 1455 830 1430 720 1370 630 1270 570 1135 553 1020 557 890 598 768 665 650 752 568z"
      />
      <path
        fill="#fff"
        strokeWidth="1.500"
        d="M845 515Q910 620 915 730 915 860 835 985 730 1110 570 1135L553 1020 557 890 598 768 665 650 752 568z"
      />
      <path fill="none" d="M851 513Q917 620 920 730 920 864 840 992 735 1118 574 1141" />
      <path
        fill="#fff"
        strokeWidth="1.500"
        d="M1430 802Q1290 820 1195 912 1090 1040 1088 1210 1090 1330 1157 1420L1250 1365 1340 1275 1405 1165 1443 1040 1452 920 1437 802z"
      />
      <path fill="none" d="M1430 806Q1292 826 1199 916 1094 1044 1092 1210 1094 1330 1160 1416" />
    </g>
    <circle cx="3011" cy="1444" r="18" fill="#a9b5b7" stroke="#222" />
    <circle cx="3011" cy="1444" r="12" fill="none" stroke="#222" />

    {/* upper pedal */}
    <g transform="translate(2500 1000) scale(.5102 .4591)" stroke="#2f3638">
      <path d="M248 268L237 284 258 318 290 345 300 300z" fill="#8a9698" />
      <path d="M248 268L310 312 308 335 270 308z" fill="#dfe8ea" />
    </g>

    {/* frame */}
    <Tube from={[2594, 884]} to={[2682, 842]} w={12} />
    <Tube from={[2352, 1018]} to={[2684, 850]} w={14} />
    <Tube from={[2571, 1141]} to={[2652, 1190]} w={10} />
    <Tube from={[2350, 1022]} to={[2652, 1195]} w={13} />
    <Tube from={[2698, 684]} to={[2689, 815]} w={13} />
    <Tube from={[2692, 852]} to={[3096, 1114]} w={19} />
    <Tube from={[2687, 812]} to={[2656, 1200]} w={18} />
    <path d="M2679 811h18" stroke="#111" strokeWidth="3" />
    <Tube from={[2692, 1221]} to={[3046, 1155]} w={16} />
    <Tube from={[2682, 1210]} to={[3089, 1141]} w={19} />
    <path d="M2697 1216L3040 1158" stroke="#2f3638" strokeWidth="2" />
    <path d="M2688 1202l3 20M2696 1201l3 20M3038 1142l3 18M3045 1141l3 18" stroke="#2f3638" fill="none" />
    <path d="M2591 879q5 10 12 20M2576 1142q0 8-5 16" stroke="#2f3638" fill="none" />
    <Tube from={[3109, 1074]} to={[3083, 1180]} w={18} />
    <ellipse cx="3110" cy="1073" rx="10" ry="4" fill="#cfdadc" stroke="#222" />
    <ellipse cx="3110" cy="1073" rx="6" ry="2" fill="#556" />
    <path d="M3081 1178l1 22" stroke="#8a9698" strokeWidth="12" strokeLinecap="round" />
    <Tube from={[3081, 1196]} to={[3014, 1442]} w={11} />

    {/* crank set */}
    <circle cx="2655" cy="1220" r="28" fill="#a3afb1" stroke="#222" strokeWidth="1.500" />
    <Tube from={[2659, 1226]} to={[2657, 1278]} w={6} />
    <circle cx="2660" cy="1226" r="5" fill="none" stroke="#333" />
    <g transform="translate(2500 1000) scale(.5102 .4591)" stroke="#2f3638">
      <path d="M285 587L275 602 298 637 305 607z" fill="#8a9698" />
      <path d="M285 587L366 663 358 681 298 637 305 607z" fill="#b9c5c7" />
      <path d="M285 587L366 663 308 612z" fill="#e9f2f4" />
    </g>

    {/* saddle */}
    <g transform="translate(2560 600) scale(.3333)" stroke="#2f3638">
      <path d="M388 236h62v14q-30 8-62-6z" fill="#8a9698" />
      <path d="M185 91C300 88 400 110 495 148 590 180 660 225 697 268Q710 290 683 318 630 322 595 295C480 250 380 212 182 206Q148 185 146 140 155 98 185 91z" fill="#9aa7a9" />
      <path d="M185 91C300 88 400 110 495 148 590 180 660 225 697 270 640 245 590 232 530 214 420 170 330 145 200 122z" fill="#e6eff1" />
      <path d="M146 140Q155 98 185 91L200 122Q165 122 146 140z" fill="#cbd6d8" />
      <path d="M200 122L182 206M495 148L530 214 515 266" fill="none" />
      <path d="M600 238L595 290" stroke="#b9c5c7" strokeWidth="8" />
    </g>

    {/* bottle cage */}
    <g transform="translate(2560 600) scale(.3333)" fill="none">
      <g stroke="#6d7a7e" strokeWidth="3">
        <path d="M733 940C735 880 770 830 803 811L935 890 950 920 825 842Q810 900 742 942L960 1082" />
        <path d="M755 1018L782 978M885 1102L918 1062" />
      </g>
      <g stroke="#cbd6d8">
        <path d="M733 940C735 880 770 830 803 811L935 890 950 920 825 842Q810 900 742 942L960 1082" />
        <path d="M755 1018L782 978M885 1102L918 1062" />
      </g>
    </g>

    {/* constraints and dimensions */}
    <g stroke="#4568b8" fill="none">
      <path d="M2307 773L2383 1261M2702 672L2627 942M2695 740L2686 845M2685 847L2525 991" />
      <path d="M2692 833L2828 925 3000 1050M2497 1117L2650 1147M2497 1117L2658 1278M2669 1299L2812 1573" />
      <path d="M2660 1216L2992 1160M2649 1195l7 28v18M2635 1230l22-7" />
      <path d="M2806 1097h10v8M2810 1105h12M2812 1108h8M2814 1111h4" />
    </g>
    <Align x={2605} y={918} />
    <Align x={2920} y={992} />
    <Align x={2576} y={1131} />
    <Align x={2585} y={1204} />
    <Align x={2738} y={1433} />
    <Touch x={2699} y={687} />
    <Touch x={2685} y={846} />
    <Touch x={2861} y={961} />
    <Touch x={2648} y={1150} />
    <Touch x={2657} y={1284} />
    <Touch x={2827} y={1188} />
    <Touch x={2655} y={1218} />
    <Touch x={2354} y={1037} />
    <path d="M2685 769l4 4-4 4zM2685 777l4 4-4 4z" fill="#4568b8" />
    <Concentric x={3087} y={1159} />
    <Concentric x={2839} y={1284} />
    <Concentric x={3007} y={1438} />
    <Concentric x={2334} y={1015} />
    <Concentric x={2344} y={1017} />
    <g fill="#5070b8">
      <text x="2637" y="804">15.500 in</text>
      <text x="2666" y="825">2.000 in</text>
      <text x="2731" y="872">8.000 in</text>
      <text x="2316" y="1007">0.600 in</text>
      <text x="2630" y="1214">4.100 in</text>
      <text x="2620" y="1225">-1.500 in</text>
    </g>
    <path d="M2688 840l7-11 9-15 13-15-8 22-10 8z" fill="#0a3cf0" />
    <path d="M2692 850l22 9 17 16-21-8z" fill="#f09a9a" stroke="#e07070" strokeWidth=".5" />
    <path d="M2676 831q8 3 7 14-8-4-7-14z" fill="#90d890" stroke="#40a040" />
    <text x="2697" y="796" fill="#1a40f0">ZC</text>
    <text x="2711" y="890" fill="#d83030">XC</text>
    <text x="2679" y="833" fill="#209020">YC</text>

    {/* view triad */}
    <g fill="none" stroke="#a0a0a0">
      <path d="M1459 1671l-24 35 7 10 34 22 24-34-35-22zM1442 1716l24-35 34 22M1459 1671l34 22 7 10" />
    </g>
    <path d="M1480 1687L1500 1660" stroke="#0a3cf0" strokeWidth="4" />
    <path d="M1508 1645l-14 13 9 5z" fill="#0a3cf0" />
    <path d="M1489 1719L1512 1734" stroke="#d03030" strokeWidth="4" />
    <path d="M1526 1743l-12-13-5 8z" fill="#d03030" />
    <text x="1510" y="1641" fill="#6070f0">Z</text>
    <text x="1529" y="1753" fill="#d03030">X</text>
  </svg>
)

const Viewport = () => (
  <main className="flex min-w-0 grow flex-col border-l border-[#a6a6a6]">
    <div className="flex h-[35px] shrink-0 border-b-2 border-[#005f87]">
      <div className="flex items-center gap-1 bg-[#005f87] pr-2 pl-1.5 text-white">
        <BracketIcon className="size-6" />
        <span className="pr-1">bike_assembly.prt</span>
        <button type="button" aria-label="Close" className="flex size-4 items-center justify-center">
          <svg viewBox="0 0 10 10" className="size-[9px]" stroke="#fff" strokeWidth="2" aria-hidden="true">
            <path d="M1 1l8 8M9 1l-8 8" />
          </svg>
        </button>
      </div>
    </div>
    <div className="relative min-h-0 grow border-r border-b border-[#dcdcdc] bg-white">
      <Bike />
    </div>
  </main>
)

const App = () => {
  const [activeTab, setActiveTab] = useState(0)

  return (
    <div className="relative flex h-screen flex-col overflow-hidden bg-white font-['Open_Sans','Noto_Sans',sans-serif] text-[17px] leading-6 text-[#1c1c1c]">
      {/* lower edge of the ribbon */}
      <div className="flex h-1 shrink-0 items-start border-b border-[#a0a0a0] pl-[121px]">
        <div className="h-px w-[216px] bg-[#6e6e6e]" />
        <div className="ml-[47px] h-px w-[226px] bg-[#6e6e6e]" />
        <div className="ml-[9px] h-0.5 w-[34px] bg-[#cfe5ec]" />
      </div>

      <div className="flex min-h-0 grow">
        <nav aria-label="Resource bar" className="flex w-[45px] shrink-0 flex-col bg-[#dcdcdc]">
          <button type="button" aria-label="Settings" className="flex h-[41px] shrink-0 items-center justify-center border-r border-[#a6a6a6]">
            <GearIcon />
          </button>
          {railTabs.map((tab, index) => (
            <button
              key={tab.label}
              type="button"
              aria-label={tab.label}
              onClick={() => setActiveTab(index)}
              className={`flex h-[58px] shrink-0 items-center justify-center
                         ${index === activeTab ? 'ml-[3px] border border-r-0 border-[#a6a6a6] bg-white pr-0.5' : 'border-r border-[#a6a6a6]'}`}
            >
              {tab.icon}
            </button>
          ))}
          <div className="grow border-r border-[#a6a6a6]" />
        </nav>

        <Navigator />
        <Viewport />

        <aside aria-label="Tools" className="flex w-[45px] shrink-0 flex-col items-center justify-between pt-[15px] pb-1.5">
          <div className="flex flex-col items-center gap-2.5">
            {toolButtons.map((tool) => (
              <button key={tool.label} type="button" aria-label={tool.label} className="size-8 shrink-0">
                {tool.icon}
              </button>
            ))}
          </div>
          <button type="button" aria-label="More tools" className="ml-2.5 flex h-3 w-2 items-center justify-center self-start">
            <svg viewBox="0 0 4 8" className="h-2 w-1" aria-hidden="true">
              <path d="M4 0v8L0 4z" fill="#111" />
            </svg>
          </button>
        </aside>
      </div>

      <footer className="flex h-[23px] shrink-0 items-center border-t border-[#a6a6a6] pl-1 text-base font-bold">
        Select objects and use MB3, or double-click an object
      </footer>

      {/* header context menu */}
      <div className="absolute top-[50px] left-[131px] w-[351px] border border-[#a0a0a0] bg-white shadow-[3px_3px_3px_rgba(0,0,0,0.45)]">
        <MenuList entries={contextMenu} pad="pr-px pl-0.5" />
      </div>
      <div className="absolute top-[468px] left-[479px] w-[239px] border border-[#a0a0a0] bg-white shadow-[3px_3px_3px_rgba(0,0,0,0.45)]">
        <MenuList entries={columnsMenu} pad="px-0.5" />
      </div>
    </div>
  )
}

export default App
